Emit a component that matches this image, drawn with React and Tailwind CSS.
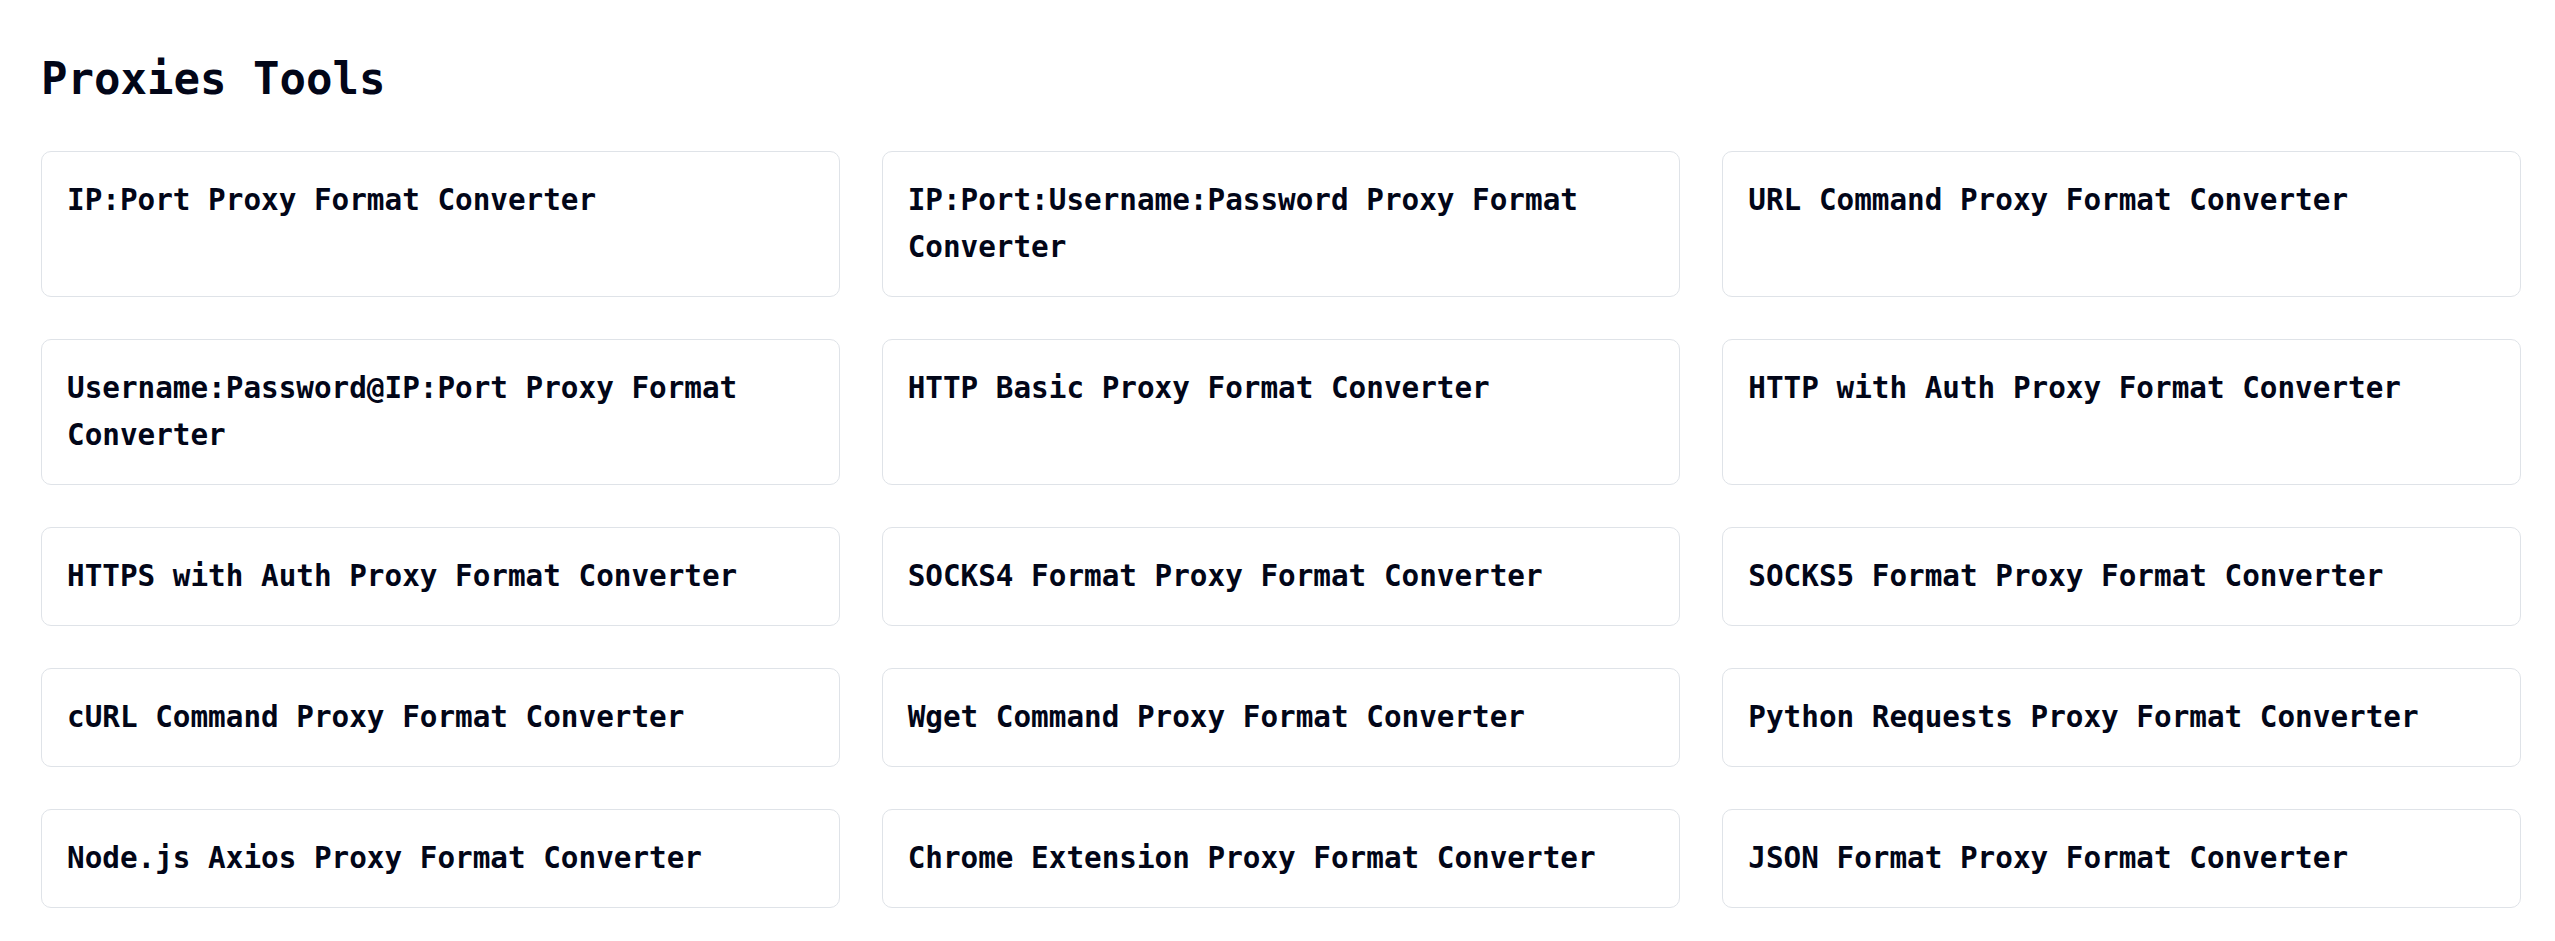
const tools = [
  'IP:Port Proxy Format Converter',
  'IP:Port:Username:Password Proxy Format Converter',
  'URL Command Proxy Format Converter',
  'Username:Password@IP:Port Proxy Format Converter',
  'HTTP Basic Proxy Format Converter',
  'HTTP with Auth Proxy Format Converter',
  'HTTPS with Auth Proxy Format Converter',
  'SOCKS4 Format Proxy Format Converter',
  'SOCKS5 Format Proxy Format Converter',
  'cURL Command Proxy Format Converter',
  'Wget Command Proxy Format Converter',
  'Python Requests Proxy Format Converter',
  'Node.js Axios Proxy Format Converter',
  'Chrome Extension Proxy Format Converter',
  'JSON Format Proxy Format Converter',
];

export default function App() {
  return (
    <div className="min-h-screen bg-white pt-[53px] pl-[41px] pr-[34px] pb-[36px] font-['DejaVu_Sans_Mono',monospace] text-slate-950">
      <h1 className="text-[44px] leading-[52px] font-bold mb-[46px]">Proxies Tools</h1>
      <div className="grid grid-cols-3 gap-[42px]">
        {tools.map((name) => (
          <a
            key={name}
            href="#"
            className="block rounded-[10px] border border-[#dfe3e8] bg-white p-[25px] text-[29.3px] leading-[47px] font-bold hover:border-gray-300"
          >
            {name}
          </a>
        ))}
      </div>
    </div>
  );
}
